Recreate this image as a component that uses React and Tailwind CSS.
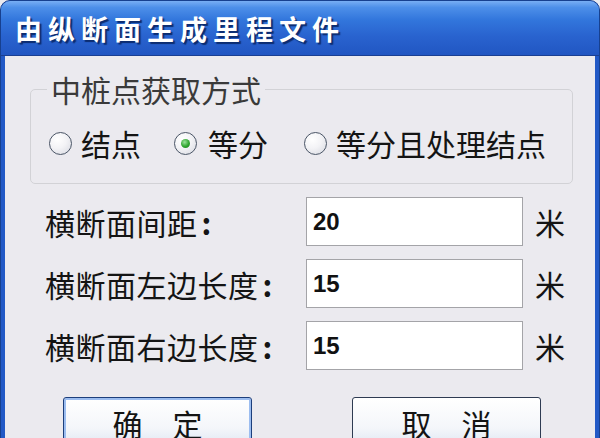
import React from "react";

function Radio({ checked }) {
  return (
    <span className="relative flex h-[23px] w-[23px] shrink-0 items-center justify-center rounded-full border border-[#4a5566] bg-[radial-gradient(circle_at_35%_30%,#ffffff_0%,#f3f3f6_45%,#d6d8e0_100%)]">
      {checked && (
        <span className="h-[9px] w-[9px] rounded-full bg-[radial-gradient(circle_at_40%_35%,#9be39b_0%,#2fa52f_55%,#1c7d1c_100%)]" />
      )}
    </span>
  );
}

function Row({ label, value }) {
  return (
    <div className="flex h-[49px] items-center">
      <div className="flex w-[261px] items-center text-[30px] leading-none text-[#141414]">
        <span className="tracking-[0.5px]">{label}</span>
        <span className="ml-[4px] font-bold">:</span>
      </div>
      <div className="flex h-[49px] w-[217px] items-center border border-[#a4a4a8] bg-white pl-[6px] font-['Liberation_Sans',sans-serif] text-[24px] font-bold leading-none text-[#111]">
        {value}
      </div>
      <div className="ml-[12px] text-[30px] leading-none text-[#141414]">米</div>
    </div>
  );
}

export default function App() {
  return (
    <div className="h-[438px] w-[600px] overflow-hidden bg-[#ebeaef] font-['Noto_Sans_CJK_SC',sans-serif]">
      <div className="flex h-[460px] flex-col rounded-t-[10px] border border-[#17408f] bg-[#2259c6]">
        <div className="flex h-[55px] shrink-0 items-center rounded-t-[9px] border-b border-[#1a3f92] bg-[linear-gradient(180deg,#78aef4_0%,#4d8fe9_12%,#3276dc_35%,#2963cf_65%,#2156c2_100%)] pl-[14px]">
          <span className="text-[27px] font-bold leading-none tracking-[6px] text-white [text-shadow:2px_2px_1px_#0c2c70]">
            由纵断面生成里程文件
          </span>
        </div>
        <div className="mx-[4px] flex-1 bg-[#ebeaef] pt-[18px]">
          <fieldset className="ml-[25px] mr-[22px] h-[110px] rounded-[5px] border border-[#d2d2d6] p-0">
            <legend className="ml-[16px] px-[4px] text-[30px] leading-[30px] text-[#3a3a3a]">
              中桩点获取方式
            </legend>
            <div className="flex items-center pl-[18px] pt-[24px] text-[30px] leading-[30px] text-[#141414]">
              <Radio />
              <span className="ml-[9px]">结点</span>
              <span className="ml-[33px]">
                <Radio checked />
              </span>
              <span className="ml-[11px]">等分</span>
              <span className="ml-[36px]">
                <Radio />
              </span>
              <span className="ml-[9px]">等分且处理结点</span>
            </div>
          </fieldset>
          <div className="mt-[13px] flex flex-col gap-[13px] pl-[40px]">
            <Row label="横断面间距" value="20" />
            <Row label="横断面左边长度" value="15" />
            <Row label="横断面右边长度" value="15" />
          </div>
          <div className="mt-[27px] flex gap-[100px] pl-[58px]">
            <div className="flex h-[52px] w-[189px] items-center justify-center rounded-[3px] border border-[#1d3f7c] bg-[linear-gradient(180deg,#ffffff_0%,#f4f6fa_60%,#dde5f2_100%)] text-[30px] leading-none text-[#141414] shadow-[inset_0_0_0_2px_#9cbdf0]">
              确　定
            </div>
            <div className="flex h-[52px] w-[189px] items-center justify-center rounded-[3px] border border-[#2e3b52] bg-[linear-gradient(180deg,#ffffff_0%,#f4f6fa_60%,#dde5f2_100%)] text-[30px] leading-none text-[#141414]">
              取　消
            </div>
          </div>
        </div>
      </div>
    </div>
  );
}
